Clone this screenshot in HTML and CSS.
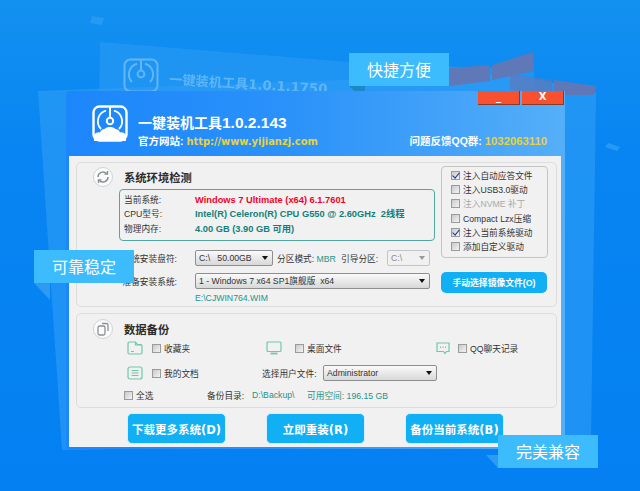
FILE: index.html
```html
<!DOCTYPE html>
<html lang="zh-CN">
<head>
    <meta charset="UTF-8">
    <meta name="viewport" content="width=device-width, initial-scale=1.0">
    <title>一键装机工具</title>
    <link rel="stylesheet" href="styles.css">
</head>
<body>
    <!-- Blurred windows behind the main one -->
    <svg class="backdrop" width="640" height="491" viewBox="0 0 640 491">
        <defs>
            <linearGradient id="bgFade" x1="0" y1="0" x2="0" y2="1">
                <stop offset="0" stop-color="#1391f0"/>
                <stop offset="0.3" stop-color="#0885f2"/>
                <stop offset="1" stop-color="#0480f2"/>
            </linearGradient>
        </defs>
        <rect width="640" height="491" fill="url(#bgFade)"/>
        <polygon points="92,16 104,18 102,25 90,23" fill="#3aa6f5" opacity="0.5"/>
        <polygon points="608,143 620,147 617,151 605,147" fill="#3aa6f5" opacity="0.6"/>
        <polygon points="100,42 350,62 534,70 534,300 96,300" fill="#2f9ef6" opacity="0.5"/>
        <polygon points="38,91 510,74 596,92 591,440 62,450" fill="#2f9ef6" opacity="0.6"/>
        <polygon points="449,68 490,65 490,81 449,86" fill="#5f78b8"/>
        <polygon points="492,65 533,52 534,71 492,80" fill="#5f78b8"/>
        <polygon points="510,74 552,80 552,96 510,90" fill="#5f78b8" opacity="0.7"/>
        <polygon points="554,80 596,86 594,95 554,95" fill="#5f78b8"/>
        <text class="ghost-title" x="169" y="84" transform="rotate(3.5 169 84)">一键装机工具1.0.1.1750</text>
        <g transform="translate(123 58)" fill="none" stroke="#62b6f6" stroke-width="2">
            <rect x="1.5" y="1.5" width="33" height="32" rx="6"/>
            <path d="M14 5.7A11 11 0 0 0 9 24M22 5.7A11 11 0 0 1 27 24M18 2v10"/>
            <circle cx="18" cy="16" r="3.4"/>
        </g>
        <polygon points="349,86 365,86 365,101" fill="#1c87c9"/>
        <polygon points="34,283 50,283 50,300" fill="#2d9bf0"/>
        <polygon points="486,455 498,455 498,468" fill="#2d9bf0"/>
    </svg>

    <div class="window">
        <header class="titlebar">
            <div class="controls">
                <span class="ctl">_</span>
                <span class="ctl">X</span>
            </div>
            <div class="brand">
                <svg class="logo" width="36" height="37" viewBox="0 0 36 37">
                    <rect x="1.5" y="1.5" width="33" height="34" rx="6" fill="none" stroke="#fff" stroke-width="2.4"/>
                    <path d="M14 5.7A11 11 0 0 0 9 24M22 5.7A11 11 0 0 1 27 24" fill="none" stroke="#fff" stroke-width="1.8"/>
                    <path d="M18 2v10" stroke="#fff" stroke-width="2"/>
                    <circle cx="18" cy="16" r="3.2" fill="none" stroke="#fff" stroke-width="2"/>
                    <path d="M2 36v-6c2-2.5 4-3 6-2.5 1-3 3-3.5 4.500-3.500 1.500-1.500 3.500-2 5.500-2s4 .5 5.500 2c1.500 0 3.500.5 4.500 3.500 2-.5 4 0 6 2.500v6z" fill="#fff"/>
                </svg>
                <div class="brand-text">
                    <h1>一键装机工具<span class="version">1.0.2.143</span></h1>
                    <div class="brand-links">
                        <p>官方网站: <span class="yellow url">http://www.yijianzj.com</span></p>
                        <p>问题反馈QQ群: <span class="yellow qq">1032063110</span></p>
                    </div>
                </div>
            </div>
        </header>

        <div class="content">
            <section class="panel panel-system">
                <div class="system-left">
                    <div class="panel-head">
                        <span class="round-icon">
                            <svg width="14" height="14" viewBox="0 0 14 14" fill="none" stroke="#8a9295" stroke-width="1.5">
                                <path d="M2 7a5 5 0 0 1 8.6-3.5M12 7a5 5 0 0 1-8.6 3.5"/>
                                <path d="M11.5 1v3h-3M2.5 13v-3h3"/>
                            </svg>
                        </span>
                        <h2>系统环境检测</h2>
                    </div>
                    <div class="info-box">
                        <div class="info-row"><span class="info-label">当前系统:</span><b class="red">Windows 7 Ultimate (x64) 6.1.7601</b></div>
                        <div class="info-row"><span class="info-label">CPU型号:</span><b class="green">Intel(R) Celeron(R) CPU G550 @ 2.60GHz&nbsp; 2线程</b></div>
                        <div class="info-row"><span class="info-label">物理内存:</span><b class="green">4.00 GB (3.90 GB 可用)</b></div>
                    </div>
                    <div class="form-row first">
                        <span class="form-label">系统安装盘符:</span>
                        <div class="select select-disk">C:\&nbsp;&nbsp; 50.00GB<i class="arrow"></i></div>
                        <span class="part part-mode">分区模式: <span class="green-plain">MBR</span></span>
                        <span class="part part-boot">引导分区:</span>
                        <div class="select select-boot">C:\<i class="arrow"></i></div>
                    </div>
                    <div class="form-row">
                        <span class="form-label">准备安装系统:</span>
                        <div class="select select-image">1 - Windows 7 x64 SP1旗舰版&nbsp; x64<i class="arrow"></i></div>
                    </div>
                    <div class="image-path">E:\CJWIN764.WIM</div>
                </div>
                <div class="system-right">
                    <div class="options">
                        <label class="opt"><span class="check on"></span>注入自动应答文件</label>
                        <label class="opt"><span class="check"></span>注入USB3.0驱动</label>
                        <label class="opt off"><span class="check"></span>注入NVME 补丁</label>
                        <label class="opt"><span class="check"></span>Compact Lzx压缩</label>
                        <label class="opt"><span class="check on"></span>注入当前系统驱动</label>
                        <label class="opt"><span class="check"></span>添加自定义驱动</label>
                    </div>
                    <button class="btn btn-small">手动选择镜像文件(O)</button>
                </div>
            </section>

            <section class="panel panel-backup">
                <div class="panel-head">
                    <span class="round-icon">
                        <svg width="14" height="14" viewBox="0 0 14 14" fill="none" stroke="#8a9295" stroke-width="1.3">
                            <rect x="2" y="4" width="7" height="9" rx="1.5"/>
                            <path d="M6 1.5h4.5a1.5 1.5 0 0 1 1.5 1.5v6"/>
                        </svg>
                    </span>
                    <h2>数据备份</h2>
                </div>
                <div class="backup-row row-one">
                    <svg class="type-icon" width="16" height="14" viewBox="0 0 16 14" fill="none" stroke="#6fc8a8" stroke-width="1.2">
                        <path d="M2.5 1h6l2 2.5h3a1.5 1.5 0 0 1 1.5 1.5v6.5a1.5 1.5 0 0 1-1.5 1.500h-11A1.5 1.5 0 0 1 1 11.500v-9A1.5 1.5 0 0 1 2.5 1z"/>
                        <path d="M4 10.500h3M8.500 1v3h6"/>
                    </svg>
                    <label class="item item-a"><span class="check"></span>收藏夹</label>
                    <svg class="type-icon" width="16" height="14" viewBox="0 0 16 14" fill="none" stroke="#6fc8a8" stroke-width="1.2">
                        <rect x="1" y="1" width="14" height="9.5" rx="1"/>
                        <path d="M4.5 12.5h7" stroke-width="1.8"/>
                    </svg>
                    <label class="item item-b"><span class="check"></span>桌面文件</label>
                    <svg class="type-icon" width="14" height="13" viewBox="0 0 14 13" fill="none" stroke="#6fc8a8" stroke-width="1.2">
                        <path d="M1 1h12v8.5h-2.5l-1.5 2-1.5-2H1z"/>
                        <path d="M4 5.3h1M6.5 5.3h1M9 5.3h1" stroke-width="1.4"/>
                    </svg>
                    <label class="item item-c"><span class="check"></span>QQ聊天记录</label>
                </div>
                <div class="backup-row row-two">
                    <svg class="type-icon" width="16" height="14" viewBox="0 0 16 14" fill="none" stroke="#6fc8a8" stroke-width="1.2">
                        <rect x="1" y="1" width="14" height="12" rx="2"/>
                        <path d="M4.5 4.5h7M4.5 7h7M4.5 9.5h7"/>
                    </svg>
                    <label class="item item-a"><span class="check"></span>我的文档</label>
                    <span class="user-label">选择用户文件:</span>
                    <div class="select select-user">Administrator<i class="arrow"></i></div>
                </div>
                <div class="backup-row row-three">
                    <label class="item item-all"><span class="check"></span>全选</label>
                    <span class="dir-label">备份目录:</span>
                    <span class="green-plain dir-path">D:\Backup\</span>
                    <span class="green-plain">可用空间: 196.15 GB</span>
                </div>
            </section>

            <div class="actions">
                <button class="btn">下载更多系统(D)</button>
                <button class="btn">立即重装(R)</button>
                <button class="btn">备份当前系统(B)</button>
            </div>
        </div>
    </div>

    <!-- Floating captions -->
    <div class="tag tag-fast">快捷方便</div>
    <div class="tag tag-stable">可靠稳定</div>
    <div class="tag tag-compat">完美兼容</div>
</body>
</html>
```

FILE: styles.css
```css
/* Global Styles */
body {
    margin: 0;
    width: 640px;
    height: 491px;
    overflow: hidden;
    position: relative;
    background-color: #0682f2;
    color: #333;
    font-family: "Liberation Sans", "Noto Sans CJK SC", sans-serif;
    font-size: 8.7px;
}

h1, h2, p {
    margin: 0;
}

/* Backdrop */
.backdrop {
    position: absolute;
    left: 0;
    top: 0;
    filter: blur(0.6px);
}
.ghost-title {
    font-family: "DejaVu Sans", "Noto Sans CJK SC", sans-serif;
    font-size: 13.2px;
    font-weight: bold;
    fill: #5fb6f6;
}

/* Main window */
.window {
    position: absolute;
    left: 66px;
    top: 91px;
    width: 499px;
    height: 358px;
    box-sizing: border-box;
    display: flex;
    flex-direction: column;
    padding: 0 4px 2px 3px;
    border-radius: 4px 0 0 0;
    background: linear-gradient(90deg, #1c86fb 0%, #2b92fa 45%, #55aff8 100%);
}

.titlebar {
    height: 65px;
    display: flex;
    flex-direction: column;
    color: #fff;
}
.controls {
    display: flex;
    justify-content: flex-end;
    gap: 2px;
    margin-right: -3px;
}
.ctl {
    width: 41px;
    height: 13px;
    background-color: #f9512f;
    border-bottom: 1px solid #8a3a28;
    border-right: 1px solid #8a3a28;
    text-align: center;
    color: #fff;
    font-family: "DejaVu Sans", sans-serif;
    font-weight: bold;
    font-size: 10px;
    line-height: 12px;
}
.brand {
    display: flex;
    padding-left: 23px;
}
.logo {
    flex: none;
}
.brand-text {
    flex: 1;
    margin-left: 10px;
    padding-top: 8px;
}
.brand-text h1 {
    font-size: 14px;
    line-height: 20px;
    font-weight: bold;
}
.version {
    font-size: 15.5px;
}
.brand-links {
    display: flex;
    justify-content: space-between;
    padding-right: 14px;
    margin-top: 1px;
    font-size: 10.5px;
    font-weight: bold;
    line-height: 14px;
}
.yellow {
    color: #e8d23c;
}
.url {
    font-family: "DejaVu Sans", sans-serif;
    font-size: 9.9px;
}
.qq {
    font-size: 11.3px;
}

/* Content area */
.content {
    flex: 1;
    background-color: #f1f1f1;
    padding: 6px 4px 0 7px;
}
.panel {
    border: 1px solid #dddddd;
    border-radius: 5px;
    background-color: #f1f1f1;
    box-sizing: border-box;
}
.panel-system {
    height: 145px;
    display: flex;
    padding: 3px 8px 0 16px;
    gap: 6px;
}
.system-left {
    width: 342px;
    flex: none;
}
.panel-head {
    display: flex;
    align-items: center;
    height: 22px;
}
.panel-head h2 {
    margin-left: 11px;
    font-size: 11.3px;
    color: #2c2c2c;
}
.round-icon {
    width: 20px;
    height: 20px;
    box-sizing: border-box;
    border: 1px solid #cfd3d4;
    border-radius: 50%;
    background-color: #fbfbfb;
    display: flex;
    align-items: center;
    justify-content: center;
}

/* System info */
.info-box {
    margin-left: 26px;
    margin-top: 1px;
    height: 52px;
    box-sizing: border-box;
    border: 1.5px solid #52a89f;
    border-radius: 4px;
    padding: 3px 0 0 4px;
}
.info-row {
    display: flex;
    height: 14.3px;
    line-height: 14px;
    white-space: nowrap;
}
.info-row b {
    font-size: 9.3px;
}
.info-label {
    flex: none;
    width: 71px;
}
.red {
    color: #f5001e;
}
.green {
    color: #12807a;
}
.green-plain {
    color: #1e9488;
}

/* Form rows */
.form-row {
    display: flex;
    align-items: center;
    height: 16px;
    margin-top: 7px;
    white-space: nowrap;
}
.form-row.first {
    margin-top: 9px;
}
.form-label {
    flex: none;
    width: 84px;
    margin-right: 18px;
    text-align: right;
}
.select {
    flex: none;
    position: relative;
    box-sizing: border-box;
    height: 16px;
    line-height: 14px;
    padding-left: 3px;
    border: 1px solid #8e8e8e;
    border-radius: 2px;
    background: linear-gradient(#fafafa, #d8d8d8);
    white-space: nowrap;
    color: #333;
}
.arrow {
    position: absolute;
    right: 4px;
    top: 5px;
    border-left: 3px solid transparent;
    border-right: 3px solid transparent;
    border-top: 4px solid #111;
}
.select-disk {
    width: 78px;
}
.part {
    flex: none;
}
.part-mode {
    width: 64px;
    margin-left: 4px;
}
.part-boot {
    width: 46px;
}
.select-boot {
    width: 43px;
    background: #f1f1f1;
    border-color: #c4c4c4;
    color: #888;
}
.select-boot .arrow {
    border-top-color: #999;
}
.select-image {
    width: 235px;
}
.image-path {
    margin: 2px 0 0 102px;
    line-height: 14px;
    color: #1e9488;
}

/* Options */
.system-right {
    width: 107px;
    flex: none;
}
.options {
    height: 92px;
    box-sizing: border-box;
    border: 1.5px solid #c4c4c4;
    border-radius: 4px;
    padding: 1px 0 0 9px;
}
.opt {
    display: flex;
    align-items: center;
    height: 14.3px;
    white-space: nowrap;
}
.opt.off {
    color: #a9a9a9;
}
.check {
    flex: none;
    position: relative;
    width: 7px;
    height: 7px;
    margin-right: 3px;
    border: 1px solid #9b9b9b;
    background: linear-gradient(135deg, #c9c9c9, #f4f4f4);
}
.check.on::after {
    content: "";
    position: absolute;
    left: 2px;
    top: -1px;
    width: 2.5px;
    height: 6px;
    border: solid #1f3f9a;
    border-width: 0 1.5px 1.5px 0;
    transform: rotate(40deg);
}

/* Buttons */
.btn {
    border: 1px solid #d7eefb;
    border-radius: 5px;
    background-color: #11b0f5;
    color: #fff;
    font-family: "DejaVu Sans", "Noto Sans CJK SC", sans-serif;
    font-weight: bold;
    font-size: 11.5px;
    width: 99px;
    height: 31px;
    padding: 0;
    white-space: nowrap;
}
.btn-small {
    display: block;
    width: 106px;
    height: 21px;
    margin-top: 14px;
    font-family: "Liberation Sans", "Noto Sans CJK SC", sans-serif;
    font-size: 8.8px;
    border: none;
}
.actions {
    display: flex;
    gap: 40px;
    padding-left: 51px;
    margin-top: 5px;
}

/* Backup */
.panel-backup {
    height: 95px;
    margin-top: 6px;
    padding: 4px 0 0 16px;
}
.backup-row {
    display: flex;
    align-items: center;
    white-space: nowrap;
}
.type-icon {
    flex: none;
}
.row-one {
    padding-left: 34px;
    height: 16px;
}
.row-two {
    margin-top: 9px;
    padding-left: 34px;
    height: 16px;
}
.row-three {
    margin-top: 7px;
    padding-left: 31px;
    height: 14px;
}
.item {
    flex: none;
    display: flex;
    align-items: center;
}
.item-a {
    width: 114px;
    margin-left: 9px;
}
.item-b {
    width: 141px;
    margin-left: 13px;
}
.item-c {
    margin-left: 8px;
}
.row-two .item-a {
    width: 110px;
}
.user-label {
    flex: none;
    width: 61px;
}
.select-user {
    width: 114px;
}
.item-all {
    width: 83px;
}
.dir-label {
    flex: none;
    width: 45px;
}
.dir-path {
    flex: none;
    width: 55px;
}

/* Captions */
.tag {
    position: absolute;
    width: 100px;
    height: 33px;
    line-height: 32px;
    text-align: center;
    background-color: #3dbcfd;
    color: #fff;
    font-family: "Noto Sans CJK SC", sans-serif;
    font-size: 16px;
}
.tag-fast {
    left: 349px;
    top: 53px;
}
.tag-stable {
    left: 34px;
    top: 250px;
}
.tag-compat {
    left: 498px;
    top: 435px;
}
```
